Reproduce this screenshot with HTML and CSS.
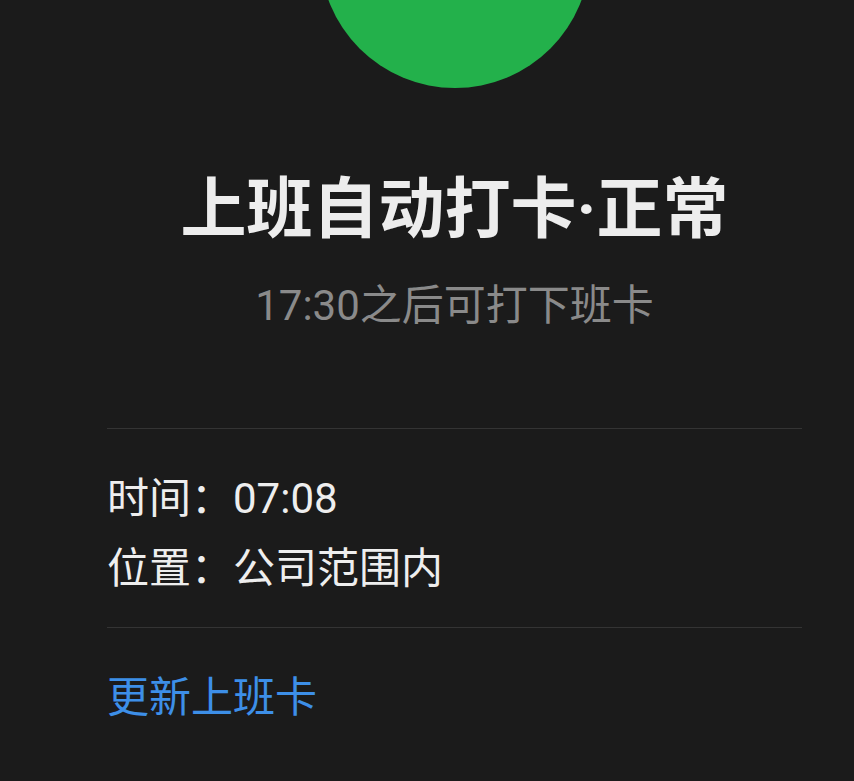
FILE: index.html
```html
<!DOCTYPE html>
<html lang="zh-CN">
<head>
<meta charset="utf-8">
<title>打卡</title>
<link rel="stylesheet" href="styles.css">
</head>
<body>
<main class="page">
  <div class="status-circle"></div>
  <h1 class="title">上班自动打卡·正常</h1>
  <p class="subtitle">17:30之后可打下班卡</p>
  <hr class="divider divider-top">
  <div class="info">
    <div class="info-row"><span class="label">时间：</span><span class="value">07:08</span></div>
    <div class="info-row"><span class="label">位置：</span><span class="value">公司范围内</span></div>
  </div>
  <hr class="divider divider-bottom">
  <a class="update-link" href="#">更新上班卡</a>
</main>
</body>
</html>
```
FILE: styles.css
```css
html, body {
  margin: 0;
  padding: 0;
  background: #1b1b1b;
  height: 100%;
  overflow: hidden;
}
body {
  font-family: Roboto, "Noto Sans CJK SC", sans-serif;
  color: #ececec;
}
.page {
  margin-left: 107px;
  width: 695px;
  display: flex;
  flex-direction: column;
}
.status-circle {
  align-self: center;
  width: 270px;
  height: 270px;
  margin-top: -182px;
  border-radius: 50%;
  background: #23b14b;
}
.title {
  margin: 82px 0 0;
  font-size: 66px;
  line-height: 80px;
  font-weight: 700;
  text-align: center;
  color: #ededed;
}
.subtitle {
  margin: 28px 0 0;
  font-size: 42px;
  line-height: 56px;
  text-align: center;
  color: #8a8a8a;
}
.divider {
  border: 0;
  height: 1px;
  background: #343434;
  margin: 0;
  width: 100%;
}
.divider-top { margin-top: 94px; }
.divider-bottom { margin-top: 23px; }
.info {
  margin-top: 35px;
  display: flex;
  flex-direction: column;
}
.info-row {
  font-size: 42px;
  line-height: 70px;
  color: #eeeeee;
  display: flex;
}
.update-link {
  margin-top: 35px;
  font-size: 42px;
  line-height: 70px;
  color: #3d8fe8;
  text-decoration: none;
  align-self: flex-start;
}
```
